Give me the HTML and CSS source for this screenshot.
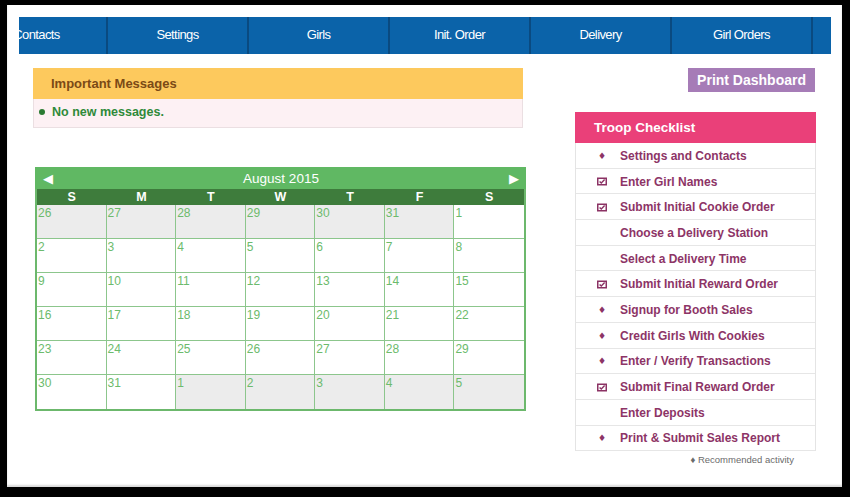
FILE: index.html
```html
<!DOCTYPE html>
<html lang="en">
<head>
    <meta charset="UTF-8">
    <title>Troop Dashboard</title>
    <link rel="stylesheet" href="styles.css">
</head>
<body>
    <div class="page">
        <div class="topnav">
            <div class="nav-track">
                <div class="nav-item">Contacts</div>
                <div class="nav-item">Settings</div>
                <div class="nav-item">Girls</div>
                <div class="nav-item">Init. Order</div>
                <div class="nav-item">Delivery</div>
                <div class="nav-item">Girl Orders</div>
                <div class="nav-item"></div>
            </div>
        </div>

        <div class="main">
            <div class="left-col">
                <div class="msg-box">
                    <div class="msg-header">Important Messages</div>
                    <div class="msg-body">
                        <span class="msg-dot"></span>
                        <span>No new messages.</span>
                    </div>
                </div>

                <div class="calendar">
                    <div class="cal-header">
                        <span class="cal-arrow">&#9664;</span>
                        <span class="cal-title">August 2015</span>
                        <span class="cal-arrow right">&#9654;</span>
                    </div>
                    <div class="cal-days">
                        <div>S</div><div>M</div><div>T</div><div>W</div><div>T</div><div>F</div><div>S</div>
                    </div>
                    <div class="cal-grid" id="calGrid"></div>
                </div>
            </div>

            <div class="right-col">
                <button class="print-btn">Print Dashboard</button>

                <div class="checklist">
                    <div class="checklist-title">Troop Checklist</div>
                    <ul class="checklist-items">
                        <li><span class="mark diamond">&#9830;</span>Settings and Contacts</li>
                        <li><span class="mark check"></span>Enter Girl Names</li>
                        <li><span class="mark check"></span>Submit Initial Cookie Order</li>
                        <li><span class="mark"></span>Choose a Delivery Station</li>
                        <li><span class="mark"></span>Select a Delivery Time</li>
                        <li><span class="mark check"></span>Submit Initial Reward Order</li>
                        <li><span class="mark diamond">&#9830;</span>Signup for Booth Sales</li>
                        <li><span class="mark diamond">&#9830;</span>Credit Girls With Cookies</li>
                        <li><span class="mark diamond">&#9830;</span>Enter / Verify Transactions</li>
                        <li><span class="mark check"></span>Submit Final Reward Order</li>
                        <li><span class="mark"></span>Enter Deposits</li>
                        <li><span class="mark diamond">&#9830;</span>Print &amp; Submit Sales Report</li>
                    </ul>
                </div>
                <div class="recommended">&#9830; Recommended activity</div>
            </div>
        </div>
    </div>

    <script>
        const checkSvg = '<svg width="10" height="9" viewBox="0 0 10 9">' +
            '<rect x="0.75" y="1.25" width="8.5" height="6.5" fill="none" stroke="#8b3264" stroke-width="1.5"/>' +
            '<path d="M2.6 4.4 L4.3 6 L7.6 2.6" fill="none" stroke="#8b3264" stroke-width="1.4"/></svg>';
        document.querySelectorAll('.mark.check').forEach(el => {
            el.innerHTML = checkSvg;
        });

        // July 26 - Sept 5, 2015
        const days = [];
        for (let d = 26; d <= 31; d++) days.push({ n: d, other: true });
        for (let d = 1; d <= 31; d++) days.push({ n: d, other: false });
        for (let d = 1; d <= 5; d++) days.push({ n: d, other: true });

        const grid = document.getElementById('calGrid');
        days.forEach(day => {
            const cell = document.createElement('div');
            cell.className = 'cal-cell' + (day.other ? ' other' : '');
            cell.textContent = day.n;
            grid.appendChild(cell);
        });
    </script>
</body>
</html>
```

FILE: styles.css
```css
body {
    margin: 0;
    padding: 5px 8px 10px 7px;
    background: #000;
    font-family: 'Liberation Sans', Arial, sans-serif;
}
.page {
    background: #fff;
    height: 482px;
    box-sizing: border-box;
    padding: 12px 11px 0 12px;
    box-shadow: inset 0 -2px 2px rgba(0,0,0,0.15);
}
.topnav {
    height: 37px;
    background: #0b63a9;
    overflow: hidden;
}
.nav-track {
    display: flex;
    margin-left: -52px;
}
.nav-item {
    flex: 0 0 141px;
    box-sizing: border-box;
    height: 37px;
    border-right: 2px solid #0a4a80;
    color: #fff;
    font-size: 13px;
    letter-spacing: -0.6px;
    line-height: 35px;
    text-align: center;
}
.main {
    display: flex;
    justify-content: space-between;
    padding: 14px 15px 0 14px;
}
.left-col {
    width: 493px;
}
.msg-box {
    width: 490px;
}
.msg-header {
    height: 31px;
    background: #fdc95d;
    color: #7b4a16;
    font-size: 13px;
    font-weight: 700;
    line-height: 31px;
    padding-left: 18px;
}
.msg-body {
    height: 29px;
    box-sizing: border-box;
    background: #fdf1f4;
    border: 1px solid #ebdfe2;
    border-top: none;
    display: flex;
    align-items: center;
    gap: 7px;
    padding: 0 0 2px 5px;
    color: #2f8a3a;
    font-size: 12.5px;
    font-weight: 700;
}
.msg-dot {
    width: 6px;
    height: 6px;
    border-radius: 50%;
    background: #2a7a32;
}
.calendar {
    width: 491px;
    margin: 39px 0 0 2px;
    box-sizing: border-box;
    border: 2px solid #6cb86c;
    border-top: none;
}
.cal-header {
    height: 22px;
    margin: 0 -2px;
    background: #60b863;
    color: #fff;
    display: flex;
    align-items: center;
    justify-content: space-between;
    padding: 0 7px 0 8px;
}
.cal-title {
    font-size: 13.5px;
}
.cal-arrow {
    font-family: 'DejaVu Sans', sans-serif;
    font-size: 13px;
    line-height: 13px;
}
.cal-days {
    display: grid;
    grid-template-columns: repeat(7, 1fr);
    height: 16px;
    background: #3e7c3c;
    color: #fff;
    font-size: 12.5px;
    font-weight: 700;
    line-height: 16px;
    text-align: center;
}
.cal-grid {
    display: grid;
    grid-template-columns: repeat(7, 1fr);
}
.cal-cell {
    height: 34px;
    box-sizing: border-box;
    border-right: 1px solid #8cc68c;
    border-bottom: 1px solid #8cc68c;
    padding: 1px 0 0 1px;
    color: #6cbb6c;
    font-size: 12px;
}
.cal-cell:nth-child(7n) {
    border-right: none;
}
.cal-cell:nth-last-child(-n+7) {
    border-bottom: none;
}
.cal-cell.other {
    background: #ececec;
}
.right-col {
    width: 241px;
    display: flex;
    flex-direction: column;
    align-items: flex-end;
}
.print-btn {
    height: 24px;
    margin-right: 1px;
    padding: 0 9px;
    border: none;
    background: #a67cb7;
    color: #fff;
    font-family: 'Liberation Sans', Arial, sans-serif;
    font-size: 14px;
    font-weight: 700;
    cursor: pointer;
}
.checklist {
    width: 241px;
    margin-top: 20px;
}
.checklist-title {
    height: 31px;
    background: #ea4079;
    color: #fff;
    font-size: 13.5px;
    font-weight: 700;
    line-height: 31px;
    padding-left: 19px;
}
.checklist-items {
    list-style: none;
    margin: 0;
    padding: 0;
    border-left: 1px solid #e4e4e4;
    border-right: 1px solid #e4e4e4;
}
.checklist-items li {
    height: 25.7px;
    box-sizing: border-box;
    border-bottom: 1px solid #e6e6e6;
    display: flex;
    align-items: center;
    padding: 1px 0 0 20px;
    gap: 12px;
    color: #8d3466;
    font-size: 12px;
    font-weight: 700;
}
.mark {
    width: 12px;
    display: flex;
    justify-content: center;
    align-items: center;
}
.mark.diamond {
    font-family: 'DejaVu Sans', sans-serif;
    font-size: 9px;
}
.recommended {
    margin: 3px 22px 0 0;
    color: #6b6b6b;
    font-size: 9.5px;
}
```
